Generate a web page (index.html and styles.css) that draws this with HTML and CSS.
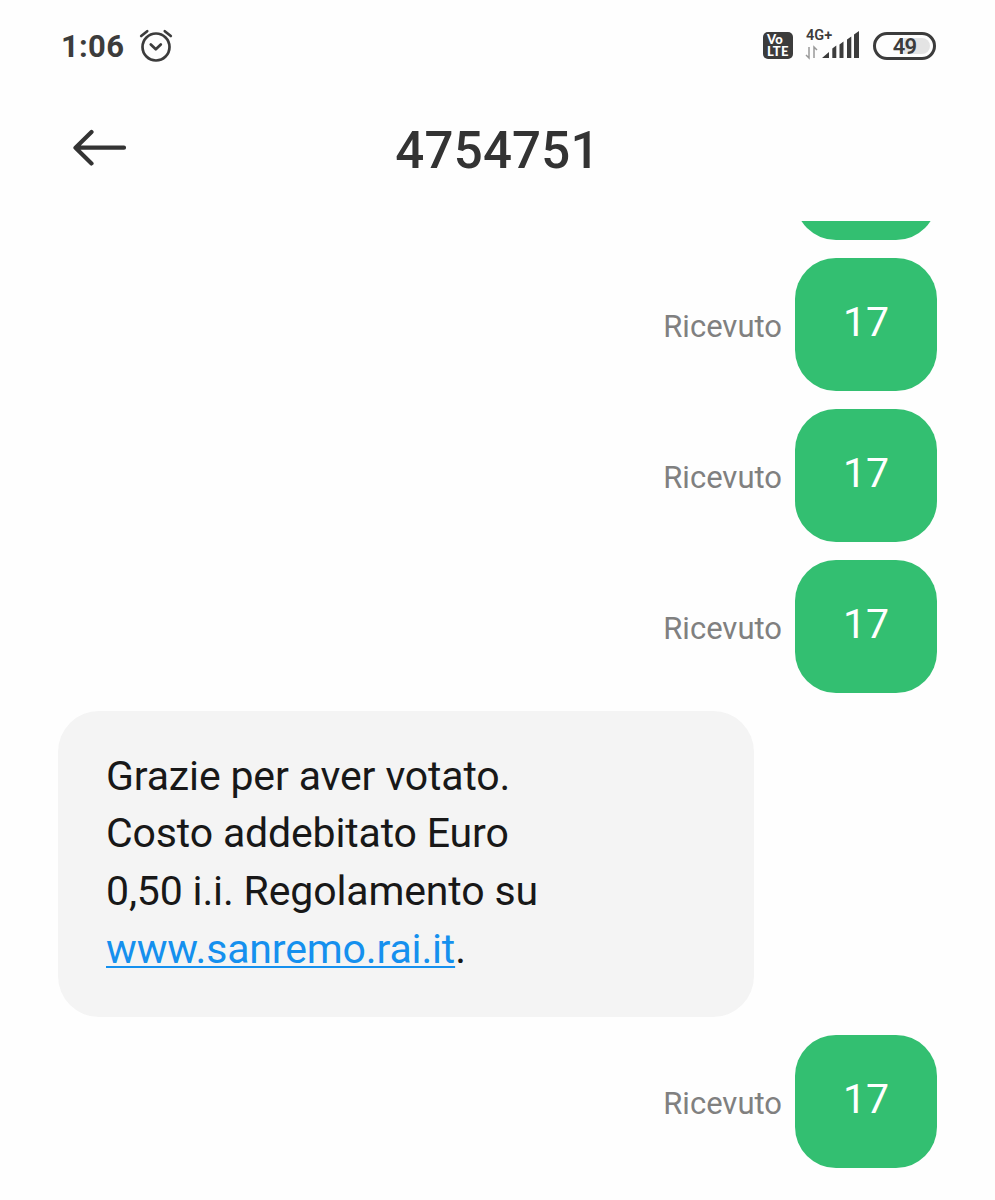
FILE: index.html
```html
<!DOCTYPE html>
<html lang="it">
<head>
    <meta charset="UTF-8">
    <meta name="viewport" content="width=device-width, initial-scale=1.0">
    <title>4754751</title>
    <link rel="stylesheet" href="styles.css">
</head>
<body>
    <div class="statusbar">
        <span class="time">1:06</span>
        <svg class="alarm" width="34" height="34" viewBox="0 0 34 34">
            <circle cx="17" cy="18" r="13.5"/>
            <path d="M11.8 15.5l5 4.800 5-4.800"/>
            <path d="M2.2 7l6-4.800M31.800 7l-6-4.800"/>
        </svg>
        <div class="volte"><span>Vo</span><span>LTE</span></div>
        <div class="network">
            <span class="nettype">4G+</span>
            <svg width="54" height="18" viewBox="0 0 54 18">
                <path class="arrows" d="M4 3v11l-3-3M9 14V3l3 3"/>
                <path class="bars" d="M17 14l7-6v6zM27.300 14V4.500l4-3V14zM34.500 14V.5l4-3V14zM42 14V-4.500l4.300-3V14zM49 14V-9.500l5-3.500v27z"/>
            </svg>
        </div>
        <div class="battery"><span>49</span></div>
    </div>

    <div class="header">
        <svg class="back" width="54" height="38" viewBox="0 0 54 38">
            <path d="M18.500 3L2.500 18.700l16 15.700M3 18.700h48"/>
        </svg>
        <h1>4754751</h1>
    </div>

    <div class="chat">
        <div class="row sent"><div class="bubble"></div></div>
        <div class="row sent">
            <span class="status">Ricevuto</span>
            <div class="bubble">17</div>
        </div>
        <div class="row sent">
            <span class="status">Ricevuto</span>
            <div class="bubble">17</div>
        </div>
        <div class="row sent">
            <span class="status">Ricevuto</span>
            <div class="bubble">17</div>
        </div>
        <div class="row">
            <div class="bubble received">Grazie per aver votato.<br>Costo addebitato Euro<br>0,50 i.i. Regolamento su<br><a href="#">www.sanremo.rai.it</a>.</div>
        </div>
        <div class="row sent">
            <span class="status">Ricevuto</span>
            <div class="bubble">17</div>
        </div>
    </div>
</body>
</html>
```

FILE: styles.css
```css
* {
    box-sizing: border-box;
}
body {
    margin: 0;
    height: 1200px;
    overflow: hidden;
    background-color: #fefefe;
    font-family: Roboto, "Liberation Sans", sans-serif;
    color: #333;
}
.statusbar {
    display: flex;
    align-items: center;
    height: 92px;
    padding: 0 59px 0 61px;
}
.time {
    font-size: 31px;
    font-weight: 700;
    letter-spacing: 0.3px;
    color: #3c3c3c;
}
.alarm {
    margin: 0 auto 0 15px;
    fill: none;
    stroke: #3c3c3c;
    stroke-width: 2.7;
    stroke-linecap: round;
    stroke-linejoin: round;
}
.volte {
    display: flex;
    flex-direction: column;
    width: 30px;
    height: 27px;
    margin-bottom: 1px;
    padding: 2px 0 0 4px;
    border-radius: 5px;
    background-color: #3c3c3c;
    color: #fff;
    font: 900 13px/11.5px Lato, sans-serif;
    letter-spacing: 0.2px;
}
.network {
    display: flex;
    flex-direction: column;
    width: 54px;
    height: 32px;
    margin: 0 14px 0 12px;
}
.nettype {
    height: 14px;
    padding-left: 1px;
    font-size: 14.5px;
    font-weight: 600;
    line-height: 12px;
    color: #3c3c3c;
}
.network svg {
    flex: none;
    overflow: visible;
}
.arrows {
    fill: none;
    stroke: #999;
    stroke-width: 1.5;
}
.bars {
    fill: #3c3c3c;
}
.battery {
    width: 63px;
    height: 28px;
    margin-bottom: 1px;
    border: 3px solid #3c3c3c;
    border-radius: 14px;
    padding: 3px;
}
.battery span {
    display: block;
    height: 16px;
    border-radius: 8px;
    background: linear-gradient(to right, #fefefe 50%, #e4e4e4 50%);
    font-size: 22px;
    font-weight: 600;
    line-height: 17px;
    letter-spacing: -0.7px;
    text-align: center;
    color: #3c3c3c;
}
.header {
    display: grid;
    grid-template-columns: 54px 1fr 54px;
    align-items: center;
    height: 129px;
    padding: 0 73px;
}
.back {
    margin-bottom: 17px;
    fill: none;
    stroke: #333;
    stroke-width: 4.2;
    stroke-linecap: round;
    stroke-linejoin: round;
}
h1 {
    margin: 0 0 12px;
    font-size: 51px;
    font-weight: 500;
    line-height: 60px;
    letter-spacing: 0.2px;
    text-align: center;
}
.chat {
    display: flex;
    flex-direction: column;
    justify-content: flex-end;
    gap: 18px;
    height: 947px;
    padding: 0 58px;
    overflow: hidden;
}
.row {
    display: flex;
    flex: none;
    align-items: center;
}
.sent {
    justify-content: flex-end;
}
.status {
    margin: 4px 13px 0 0;
    font-size: 31px;
    color: #808080;
}
.bubble {
    width: 142px;
    height: 133px;
    padding-top: 35px;
    border-radius: 41px;
    background-color: #33bf71;
    color: #fff;
    font-size: 41px;
    line-height: 58px;
    text-align: center;
}
.received {
    width: 696px;
    height: 306px;
    padding: 36.5px 48px;
    background-color: #f4f4f4;
    color: #181818;
    line-height: 57.7px;
    letter-spacing: -0.15px;
    text-align: left;
}
.received a {
    color: #1590ee;
    text-decoration-thickness: 2px;
    text-underline-offset: 3px;
    text-decoration-skip-ink: none;
}
```
